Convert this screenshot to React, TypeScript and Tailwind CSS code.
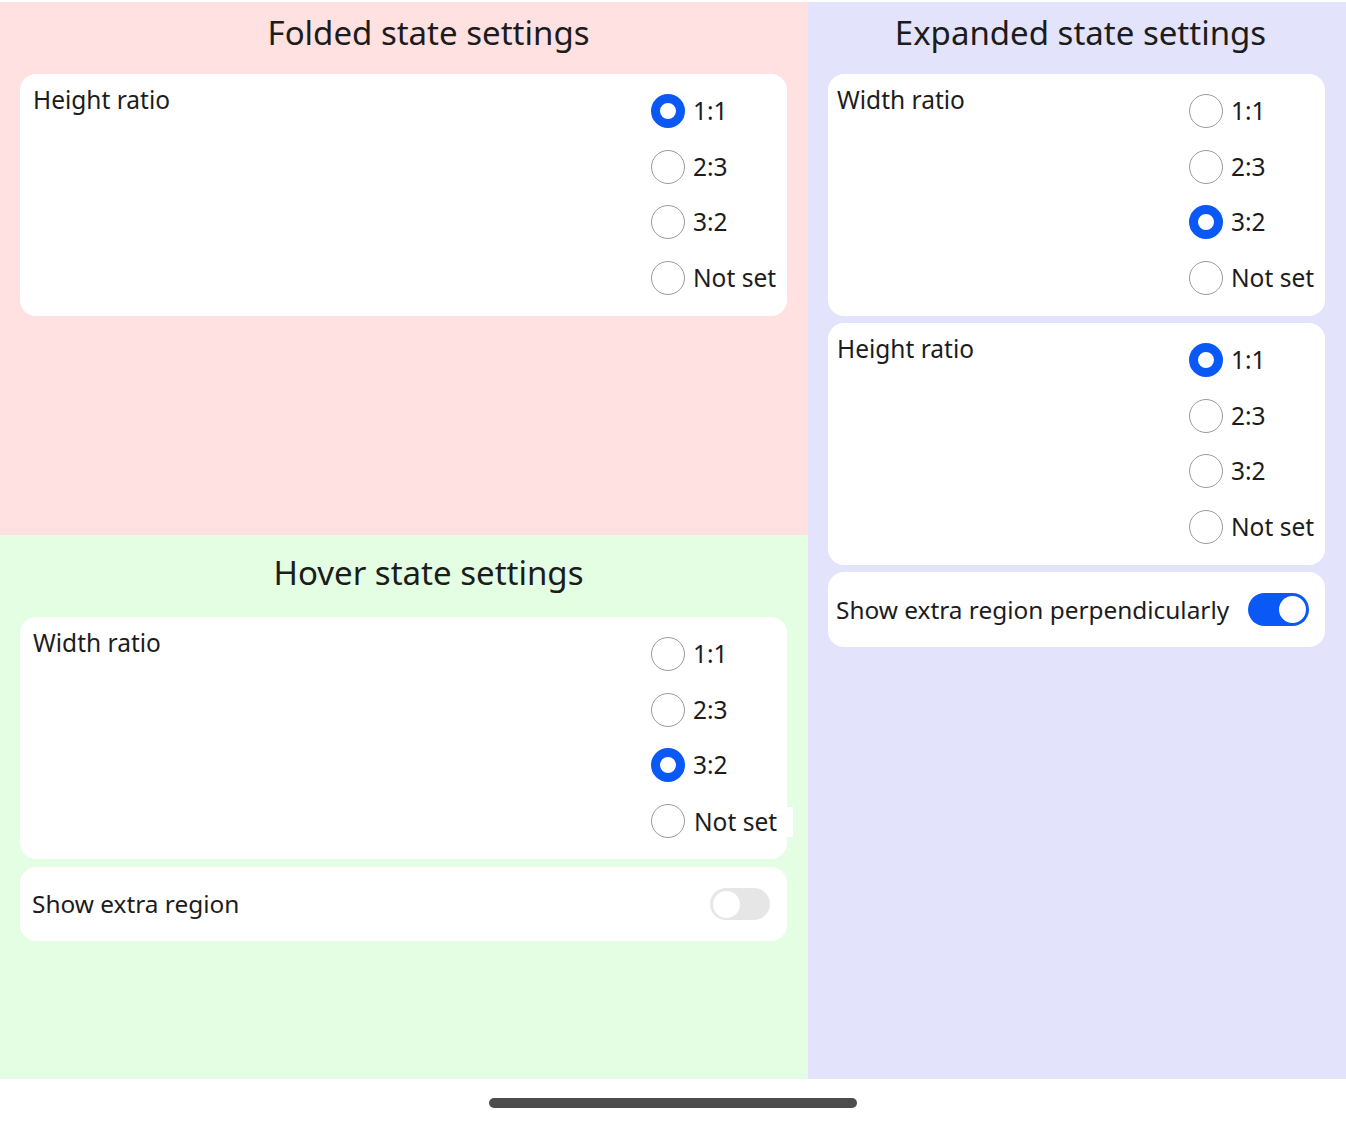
import React, { useState } from 'react';

const FONT = { fontFamily: '"Noto Sans", "Open Sans", sans-serif' };

type RadioProps = { label: string; checked: boolean; onClick: () => void; patch?: boolean };

function Radio({ label, checked, onClick, patch }: RadioProps) {
  return (
    <button type="button" onClick={onClick} className="flex h-[55.7px] w-full items-center gap-[8px] text-left">
      {checked ? (
        <span className="block h-[34px] w-[34px] shrink-0 rounded-full border-[9px] border-[#0a59f7] bg-white" />
      ) : (
        <span className="block h-[34px] w-[34px] shrink-0 rounded-full border-[1.5px] border-[#9a9a9a] bg-white" />
      )}
      <span
        className={
          patch
            ? 'relative z-10 -mr-[17px] mt-[3px] bg-white pl-[1px] pr-[16px] text-[24.5px] leading-[30px] text-[#1c1c1c]'
            : 'text-[24.5px] leading-[30px] text-[#1c1c1c]'
        }
      >
        {label}
      </span>
    </button>
  );
}

const OPTIONS = ['1:1', '2:3', '3:2', 'Not set'];

function RatioCard({ title, initial, padLeft, patch }: { title: string; initial: number; padLeft: string; patch?: boolean }) {
  const [value, setValue] = useState(initial);
  return (
    <div className="flex h-[242px] justify-between rounded-[16px] bg-white">
      <div className={`${padLeft} pt-[10px] text-[24.5px] leading-[32px] text-[#1c1c1c]`}>{title}</div>
      <div className="w-[136px] pt-[9px]">
        {OPTIONS.map((o, i) => (
          <Radio key={o} label={o} checked={value === i} onClick={() => setValue(i)} patch={patch && i === 3} />
        ))}
      </div>
    </div>
  );
}

function Toggle({ on, onClick, size }: { on: boolean; onClick: () => void; size: 'sm' | 'lg' }) {
  const track = size === 'lg' ? 'h-[33px] w-[61px]' : 'h-[32px] w-[60px]';
  return (
    <button
      type="button"
      onClick={onClick}
      className={`${track} flex shrink-0 items-center rounded-full px-[3px] ${
        on ? 'justify-end bg-[#0a59f7]' : 'justify-start bg-[#e6e6e6]'
      }`}
    >
      <span className="block h-[27px] w-[27px] rounded-full bg-white" />
    </button>
  );
}

function SwitchCard({ label, initial, padLeft, height, size, padRight }: { label: string; initial: boolean; padLeft: string; height: string; size: 'sm' | 'lg'; padRight: string }) {
  const [on, setOn] = useState(initial);
  return (
    <div className={`flex ${height} items-center justify-between rounded-[16px] bg-white ${padLeft} ${padRight}`}>
      <span className="text-[24.4px] leading-[32px] text-[#1c1c1c]">{label}</span>
      <Toggle on={on} onClick={() => setOn(!on)} size={size} />
    </div>
  );
}

export default function App() {
  return (
    <div className="flex h-[1127px] w-[1346px] flex-col bg-white" style={FONT}>
      <div className="flex h-[1079px] pt-[2px]">
        {/* left column */}
        <div className="flex w-[808px] flex-col">
          <section className="h-[533px] bg-[#ffe1e2] pl-[20px] pr-[21px]">
            <h2 className="flex h-[72px] items-start justify-center pl-[50px] pt-[8px] text-[33px] leading-[46px] text-[#1c1c1c]">
              Folded state settings
            </h2>
            <RatioCard title="Height ratio" initial={0} padLeft="pl-[13px]" />
          </section>
          <section className="flex-1 bg-[#e3fee2] pl-[20px] pr-[21px]">
            <h2 className="flex h-[82px] items-start justify-center pl-[50px] pt-[15px] text-[33px] leading-[46px] text-[#1c1c1c]">
              Hover state settings
            </h2>
            <div className="flex flex-col gap-[8px]">
              <RatioCard title="Width ratio" initial={2} padLeft="pl-[13px]" patch />
              <SwitchCard label="Show extra region" initial={false} padLeft="pl-[12px]" padRight="pr-[17px]" height="h-[74px]" size="sm" />
            </div>
          </section>
        </div>

        {/* right column */}
        <section className="flex-1 bg-[#e3e3fc] pl-[20px] pr-[21px]">
          <h2 className="flex h-[72px] items-start justify-center pl-[8px] pt-[8px] text-[33px] leading-[46px] text-[#1c1c1c]">
            Expanded state settings
          </h2>
          <div className="flex flex-col gap-[7px]">
            <RatioCard title="Width ratio" initial={2} padLeft="pl-[9px]" />
            <RatioCard title="Height ratio" initial={0} padLeft="pl-[9px]" />
            <SwitchCard label="Show extra region perpendicularly" initial={true} padLeft="pl-[8px]" padRight="pr-[16px]" height="h-[75px]" size="lg" />
          </div>
        </section>
      </div>

      {/* home indicator */}
      <div className="flex flex-1 items-center justify-center">
        <div className="h-[10px] w-[368px] rounded-full bg-[#4d4d4d]" />
      </div>
    </div>
  );
}
